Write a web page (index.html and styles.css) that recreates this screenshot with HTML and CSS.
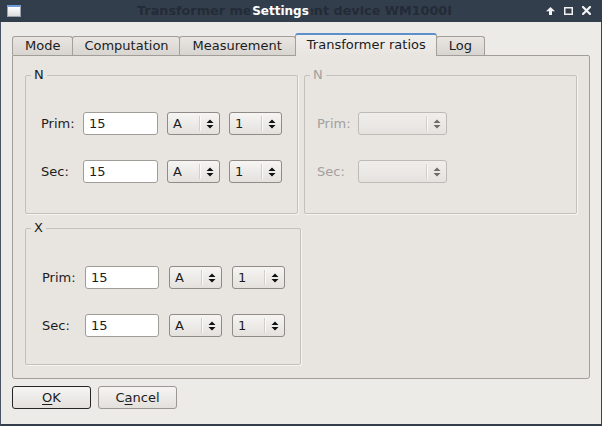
FILE: index.html
```html
<!DOCTYPE html>
<html>
<head>
<meta charset="utf-8">
<title>Settings</title>
<link rel="stylesheet" href="styles.css">
</head>
<body>
<div class="window">
  <div class="titlebar">
    <span class="app-icon"></span>
    <div class="title-area">
      <span class="ghost-title">Transformer measurement device WM1000I</span>
      <span class="title">Settings</span>
    </div>
    <div class="wm-buttons">
      <svg class="wm-btn" width="9" height="8" viewBox="0 0 9 8"><path d="M4.5 0 L9 4.2 L6 4.2 L6 8 L3 8 L3 4.2 L0 4.2 Z" fill="#f2f2f2"/></svg>
      <svg class="wm-btn" width="9" height="8" viewBox="0 0 9 8"><rect x="0.75" y="0.75" width="7.5" height="6.5" fill="none" stroke="#f2f2f2" stroke-width="1.5"/></svg>
      <svg class="wm-btn" width="9" height="9" viewBox="0 0 9 9"><path d="M1 1 L8 8 M8 1 L1 8" stroke="#f2f2f2" stroke-width="2.2" stroke-linecap="square"/></svg>
    </div>
  </div>
  <div class="client">
    <div class="tabwidget">
      <div class="tabs">
        <div class="tab">Mode</div>
        <div class="tab tab-tight">Computation</div>
        <div class="tab tab-wide">Measurement</div>
        <div class="tab active">Transformer ratios</div>
        <div class="tab">Log</div>
      </div>
      <div class="panel">
        <div class="groups">
          <fieldset class="group">
            <legend>N</legend>
            <div class="rows">
              <div class="row">
                <span class="lbl">Prim:</span>
                <span class="field">15</span>
                <span class="combo"><span class="val">A</span><span class="btn"><svg width="8" height="10" viewBox="0 0 8 10"><path d="M0.5 4 L4 0.5 L7.5 4 Z M0.5 6 L4 9.5 L7.5 6 Z" fill="#111"/></svg></span></span>
                <span class="combo"><span class="val">1</span><span class="btn"><svg width="8" height="10" viewBox="0 0 8 10"><path d="M0.5 4 L4 0.5 L7.5 4 Z M0.5 6 L4 9.5 L7.5 6 Z" fill="#111"/></svg></span></span>
              </div>
              <div class="row">
                <span class="lbl">Sec:</span>
                <span class="field">15</span>
                <span class="combo"><span class="val">A</span><span class="btn"><svg width="8" height="10" viewBox="0 0 8 10"><path d="M0.5 4 L4 0.5 L7.5 4 Z M0.5 6 L4 9.5 L7.5 6 Z" fill="#111"/></svg></span></span>
                <span class="combo"><span class="val">1</span><span class="btn"><svg width="8" height="10" viewBox="0 0 8 10"><path d="M0.5 4 L4 0.5 L7.5 4 Z M0.5 6 L4 9.5 L7.5 6 Z" fill="#111"/></svg></span></span>
              </div>
            </div>
          </fieldset>
          <fieldset class="group disabled">
            <legend>N</legend>
            <div class="rows">
              <div class="row">
                <span class="lbl">Prim:</span>
                <span class="combo wide"><span class="val"></span><span class="btn"><svg width="8" height="10" viewBox="0 0 8 10"><path d="M0.5 4 L4 0.5 L7.5 4 Z M0.5 6 L4 9.5 L7.5 6 Z" fill="#6f6d6a"/></svg></span></span>
              </div>
              <div class="row">
                <span class="lbl">Sec:</span>
                <span class="combo wide"><span class="val"></span><span class="btn"><svg width="8" height="10" viewBox="0 0 8 10"><path d="M0.5 4 L4 0.5 L7.5 4 Z M0.5 6 L4 9.5 L7.5 6 Z" fill="#6f6d6a"/></svg></span></span>
              </div>
            </div>
          </fieldset>
          <fieldset class="group group-x">
            <legend>X</legend>
            <div class="rows">
              <div class="row">
                <span class="lbl">Prim:</span>
                <span class="field">15</span>
                <span class="combo"><span class="val">A</span><span class="btn"><svg width="8" height="10" viewBox="0 0 8 10"><path d="M0.5 4 L4 0.5 L7.5 4 Z M0.5 6 L4 9.5 L7.5 6 Z" fill="#111"/></svg></span></span>
                <span class="combo"><span class="val">1</span><span class="btn"><svg width="8" height="10" viewBox="0 0 8 10"><path d="M0.5 4 L4 0.5 L7.5 4 Z M0.5 6 L4 9.5 L7.5 6 Z" fill="#111"/></svg></span></span>
              </div>
              <div class="row">
                <span class="lbl">Sec:</span>
                <span class="field">15</span>
                <span class="combo"><span class="val">A</span><span class="btn"><svg width="8" height="10" viewBox="0 0 8 10"><path d="M0.5 4 L4 0.5 L7.5 4 Z M0.5 6 L4 9.5 L7.5 6 Z" fill="#111"/></svg></span></span>
                <span class="combo"><span class="val">1</span><span class="btn"><svg width="8" height="10" viewBox="0 0 8 10"><path d="M0.5 4 L4 0.5 L7.5 4 Z M0.5 6 L4 9.5 L7.5 6 Z" fill="#111"/></svg></span></span>
              </div>
            </div>
          </fieldset>
        </div>
      </div>
    </div>
    <div class="buttons">
      <button class="pbtn default"><u>O</u>K</button>
      <button class="pbtn">C<u>a</u>ncel</button>
    </div>
  </div>
</div>
</body>
</html>
```

FILE: styles.css
```css
* { box-sizing: border-box; }
html, body { margin: 0; padding: 0; }
body {
  width: 602px;
  height: 426px;
  overflow: hidden;
  background: #333e4d;
  font-family: "DejaVu Sans", "Noto Sans", sans-serif;
  font-size: 13px;
  color: #1c1c1c;
}
.window {
  width: 602px;
  height: 426px;
  display: flex;
  flex-direction: column;
}

/* title bar */
.titlebar {
  height: 22px;
  flex: none;
  display: flex;
  align-items: center;
  background: #333e4d;
  position: relative;
}
.app-icon {
  width: 14px;
  height: 12px;
  margin-left: 7px;
  margin-top: -1px;
  border: 1px solid #9aa3ad;
  border-top: 2px solid #6f9bd6;
  background: linear-gradient(#ffffff, #dcdcdc);
  flex: none;
}
.title-area {
  flex: 1;
  display: flex;
  justify-content: center;
  align-items: center;
  height: 22px;
}
.ghost-title {
  position: absolute;
  left: 137px;
  top: 0;
  line-height: 22px;
  font-size: 12.8px;
  font-weight: bold;
  color: #232b37;
  white-space: nowrap;
}
.title {
  position: relative;
  font-size: 12px;
  font-weight: bold;
  color: #ffffff;
  background: #333e4d;
  padding: 0 2px;
  line-height: 22px;
  margin-left: -6px;
}
.wm-buttons {
  display: flex;
  align-items: center;
  gap: 9px;
  margin-right: 11px;
  margin-top: -1px;
}
.wm-btn { display: block; }

/* client area */
.client {
  flex: 1;
  background: #edebe7;
  border-left: 1px solid #4a5361;
  border-right: 1px solid #3a4350;
  border-bottom: 2px solid #333e4d;
  padding: 11px 11px 15px 11px;
  display: flex;
  flex-direction: column;
  gap: 7px;
}
.tabwidget {
  display: flex;
  flex-direction: column;
}
.tabs {
  display: flex;
  align-items: flex-end;
  height: 23px;
  margin-bottom: -1px;
  position: relative;
  z-index: 1;
}
.tab {
  height: 19px;
  margin-bottom: 1px;
  margin-right: -1px;
  padding: 0 12px 0 12px;
  border: 1px solid #a3a09c;
  border-bottom: none;
  border-radius: 3px 3px 0 0;
  background: linear-gradient(#e9e6e2, #d8d5d1);
  line-height: 18px;
  white-space: nowrap;
}
.tab.tab-tight { padding: 0 10px 0 11px; }
.tab.tab-wide { padding: 0 13px 0 13px; }
.tab.active {
  height: 23px;
  margin-bottom: 0;
  padding: 0 10px 0 11px;
  border-top: 2px solid #5d8fca;
  background: linear-gradient(#f1efec, #e8e5e1);
  line-height: 20px;
  position: relative;
  z-index: 2;
}
.panel {
  width: 578px;
  height: 324px;
  border: 1px solid #a19e9a;
  border-radius: 0 2px 3px 3px;
  background: #e8e5e1;
  padding: 12px 0 0 12px;
}
.groups {
  display: grid;
  grid-template-columns: 273px 273px;
  column-gap: 6px;
  row-gap: 7px;
  align-items: start;
}

/* group boxes */
.group {
  margin: 0;
  padding: 0;
  min-width: 0;
  border: 1px solid #c4c1bd;
  border-radius: 2px;
  box-shadow: 1px 1px 0 #f6f4f2;
}
.group legend {
  padding: 0 3px;
  margin-left: 5px;
  line-height: 14px;
  color: #1c1c1c;
}
.group.disabled legend,
.group.disabled .lbl { color: #a3a09d; }
.group-x { width: 276px; }
.rows {
  display: flex;
  flex-direction: column;
  gap: 25px;
  padding: 30px 0 30px 15px;
}
.group-x .rows { padding: 31px 0 27px 16px; }
.row {
  display: flex;
  align-items: center;
  gap: 9px;
  height: 23px;
}
.group-x .row { gap: 10px; }
.lbl {
  width: 33px;
  flex: none;
}
.group.disabled .rows { padding-left: 12px; }
.group.disabled .lbl { width: 32px; }
.field {
  width: 75px;
  height: 23px;
  flex: none;
  background: #ffffff;
  border: 1px solid #a09d99;
  border-radius: 3px;
  padding-left: 5px;
  line-height: 21px;
}
.group-x .field { width: 74px; }
.combo {
  width: 53px;
  height: 23px;
  flex: none;
  display: flex;
  border: 1px solid #8f8c88;
  border-radius: 3px;
  background: linear-gradient(#f6f5f3, #e4e1dd);
  line-height: 21px;
}
.combo .val {
  flex: 1;
  padding-left: 5px;
}
.combo .btn {
  width: 20px;
  flex: none;
  display: flex;
  align-items: center;
  justify-content: center;
  margin: 3px 0;
  border-left: 1px solid #d2cfcb;
  box-shadow: inset 1px 0 0 #fbfaf9;
}
.combo .btn svg { display: block; }
.combo.wide {
  width: 89px;
  border-color: #bebbb7;
  background: linear-gradient(#f0eeeb, #e6e3df);
}

/* dialog buttons */
.buttons {
  display: flex;
  gap: 7px;
  height: 23px;
}
.pbtn {
  width: 79px;
  height: 23px;
  font-family: "DejaVu Sans", "Noto Sans", sans-serif;
  font-size: 13px;
  color: #1c1c1c;
  border: 1px solid #9b9894;
  border-radius: 3px;
  background: linear-gradient(#f6f5f3, #e3e0dc);
  padding: 0;
}
.pbtn.default { border-color: #262626; }
.pbtn u { text-decoration-thickness: 1px; text-underline-offset: 2px; }
```
